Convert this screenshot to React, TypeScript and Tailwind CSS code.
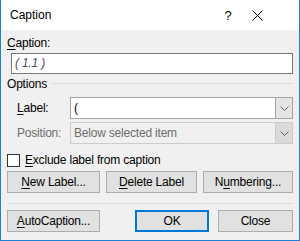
import { useState } from "react";

function Chevron() {
  return (
    <svg width="9" height="5" viewBox="0 0 9 5" className="block">
      <path d="M0.5 0.5 L4.5 4.5 L8.5 0.5" fill="none" stroke="#5f5f5f" strokeWidth="1" />
    </svg>
  );
}

function Btn({ children, className = "", primary = false }: { children: React.ReactNode; className?: string; primary?: boolean }) {
  return (
    <button
      className={
        "h-[22px] flex items-center justify-center bg-[#e1e1e1] text-black " +
        (primary ? "border-2 border-[#0078d7] " : "border border-[#adadad] ") +
        className
      }
    >
      {children}
    </button>
  );
}

export default function App() {
  const [exclude, setExclude] = useState(false);

  return (
    <div className="w-[300px] h-[241px] flex flex-col border-x border-b border-[#1883d7] bg-[#f0f0f0] text-[12px] leading-[15px] tracking-[-0.2px] text-black font-['Segoe_UI','Liberation_Sans',sans-serif] select-none">
      {/* 标题栏 */}
      <div className="h-[30px] bg-white flex items-center shrink-0">
        <span className="pl-[9px] text-[12px] tracking-normal text-black">Caption</span>
        <div className="ml-auto flex items-center">
          <span className="w-[20px] text-center text-[13px] mr-[14px]">?</span>
          <svg width="11" height="11" viewBox="0 0 11 11" className="mr-[36px]">
            <path d="M0.5 0.5 L10.5 10.5 M10.5 0.5 L0.5 10.5" stroke="#000" strokeWidth="1" />
          </svg>
        </div>
      </div>

      <div className="flex-1 flex flex-col px-[6px] pt-[6px]">
        {/* 题注 */}
        <div>
          <span className="underline underline-offset-2">C</span>aption:
        </div>
        <div className="ml-[4px] mt-[2px] h-[21px] border border-[#7a7a7a] bg-white flex items-center pl-[3px] italic text-[#4d5066]">
          ( 1.1 )
        </div>

        {/* 选项 */}
        <div className="mt-[3px] flex items-center">
          <span>Options</span>
          <div className="flex-1 h-px bg-[#dcdcdc] ml-[5px] mt-[-2px]" />
        </div>

        <div className="mt-[5px] flex items-center h-[22px]">
          <span className="w-[59px] pl-[10px]">
            <span className="underline underline-offset-2">L</span>abel:
          </span>
          <div className="ml-[4px] flex-1 h-[22px] border border-[#a5a5a5] bg-white flex items-center">
            <span className="flex-1 pl-[3px]">(</span>
            <div className="w-[17px] h-full bg-[#e5e5e5] border-l border-[#a5a5a5] flex items-center justify-center">
              <Chevron />
            </div>
          </div>
        </div>

        <div className="mt-[3px] flex items-center h-[22px] text-[#6d6d6d]">
          <span className="w-[59px] pl-[10px]">Position:</span>
          <div className="ml-[4px] flex-1 h-[22px] border border-[#cccccc] bg-[#f0f0f0] flex items-center">
            <span className="flex-1 pl-[3px]">Below selected item</span>
            <div className="w-[17px] h-full bg-[#dadada] border-l border-[#cccccc] flex items-center justify-center">
              <Chevron />
            </div>
          </div>
        </div>

        {/* 排除标签 */}
        <label className="mt-[9px] flex items-center h-[14px]" onClick={() => setExclude(!exclude)}>
          <span className="w-[13px] h-[13px] border border-[#333333] bg-white shrink-0" />
          <span className="ml-[5px]">
            <span className="underline underline-offset-2">E</span>xclude label from caption
          </span>
        </label>

        <div className="mt-[4px] flex justify-between">
          <Btn className="w-[93px]">
            <span className="underline underline-offset-2">N</span>ew Label...
          </Btn>
          <Btn className="w-[91px]">
            <span className="underline underline-offset-2">D</span>elete Label
          </Btn>
          <Btn className="w-[90px]">
            N<span className="underline underline-offset-2">u</span>mbering...
          </Btn>
        </div>

        <div className="mt-[10px] h-px bg-[#dcdcdc]" />

        <div className="mt-[6px] flex items-center">
          <Btn className="w-[93px]">
            <span className="underline underline-offset-2">A</span>utoCaption...
          </Btn>
          <Btn primary className="w-[74px] ml-auto">OK</Btn>
          <Btn className="w-[75px] ml-[9px]">Close</Btn>
        </div>
      </div>
    </div>
  );
}
